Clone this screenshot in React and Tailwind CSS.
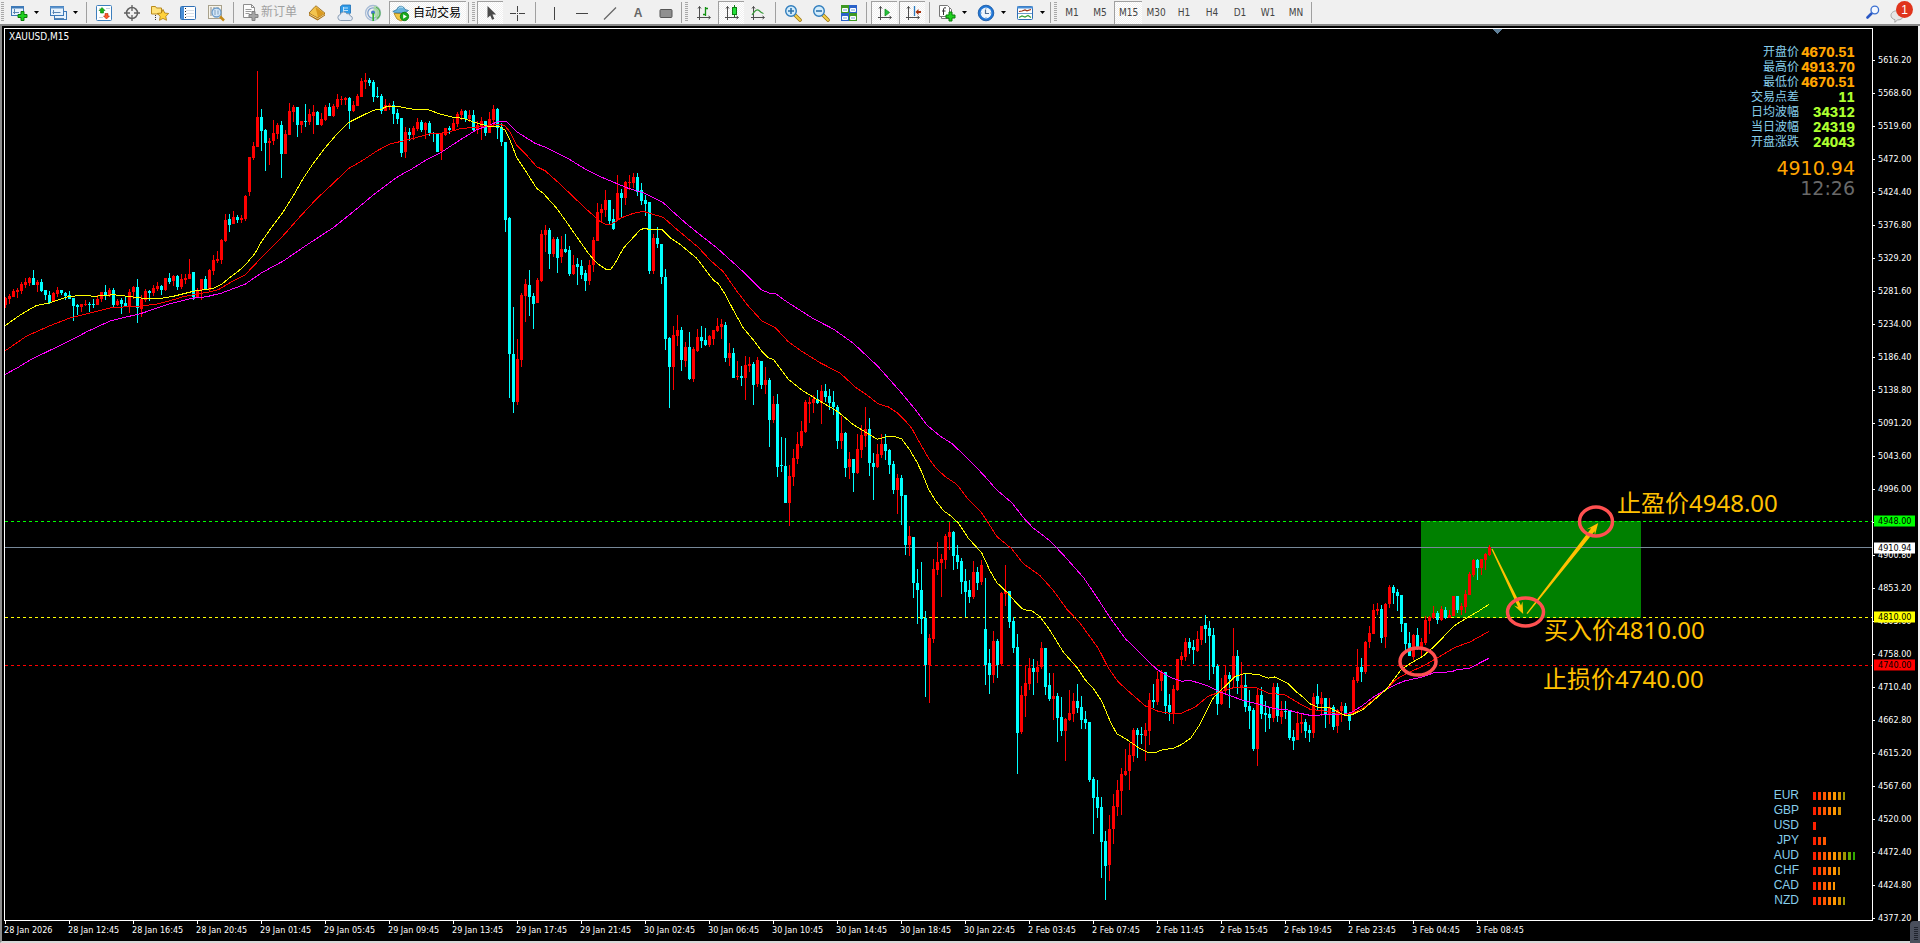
import React from "react";

/* ---------- chart data ---------- */

const VIEW = { x: 5, y: 29, w: 1867, h: 891 };

// Each bar: direction (u/d), high, body top, body bottom, low.
const SEGMENTS = [
  {
    top: 40, unit: 3, bars: `u770,774,795,804 u762,768,777,792 u747,753,771,771 u744,750,756,774 u726,732,753,762 u714,726,735,744
u711,714,729,738 d690,714,735,735 u720,726,735,756 d717,726,753,756 d750,750,765,780 d753,765,789,792 u756,759,783,786
u741,750,762,771 d750,750,759,765 d756,759,768,780 d753,765,777,777 d774,774,798,843 d792,795,801,825 u792,792,801,816
u780,792,795,798 d786,792,795,816 d777,792,795,804 u765,777,795,795 u756,756,777,786 d735,756,768,780 u744,750,768,771
d744,750,795,801 u777,783,795,798 d774,780,792,822 d771,789,798,801 u747,756,801,819 u738,741,756,777 d717,741,804,849
u765,777,807,831 u747,753,780,786 d750,753,759,783 u735,744,759,768 u726,738,747,753 d735,738,750,765 u714,714,750,753
d699,714,726,732 u705,708,723,738 d705,708,741,750 u702,717,741,747 u702,714,720,732 u657,702,717,717 d696,696,771,780
u744,750,771,774 u717,717,750,780 d708,717,750,750 u687,690,750,756 u645,660,693,705 u633,657,663,669 u597,600,660,672
u522,540,603,606 d522,537,555,576 u513,531,552,552 d525,531,540,549 u525,534,540,549 u465,468,537,543 u351,351,456,468
u306,318,354,360 u93,231,321,321 d207,231,273,333 d267,270,309,393 u294,303,309,375 u240,279,303,315 u249,255,282,297
d243,255,342,414 u270,282,342,342 u189,213,285,285 u195,201,216,246 d201,201,255,291 u243,243,255,279 d192,243,246,261
u207,222,246,255 u195,216,228,282 d213,216,255,255 u219,237,255,258 u195,201,240,243 d189,201,228,228 u192,198,228,231
u162,177,201,207 u168,177,180,195 u171,174,180,195 d171,174,213,267 u183,195,213,216 u162,168,198,198 u114,123,171,171
u99,120,126,147 d114,120,129,138 d120,126,171,186 d141,168,171,174 d162,168,213,222 u177,195,213,213 u189,195,198,210
d183,195,222,252 d207,219,237,252 d234,234,339,351 u261,276,336,354 d264,276,285,303 u258,264,285,300 u234,246,267,273
d240,246,270,276 u246,249,270,297 d243,249,279,288 d276,279,282,306 d282,282,336,336 u279,279,333,360 u264,264,285,288
d258,264,270,282 u237,249,270,273 u216,222,252,261 u207,213,225,240 d210,213,237,246 u210,225,237,246 d210,225,270,273
u243,255,270,282 u231,243,258,300 d243,243,279,288 u216,237,279,279 u195,207,240,261 d204,207,264,297`,
  },
  {
    top: 100, unit: 3, bars: `d69,81,126,138 d126,126,360,396 d351,354,762,894 d621,762,906,939 u717,777,906,915 u579,585,780,801
u537,552,588,666 d510,555,591,648 d579,588,612,687 u534,540,609,609 u390,402,543,546 u375,390,405,456 d384,390,462,507
u411,417,462,471 d411,417,474,519 u408,447,471,489 d402,447,456,459 d438,450,522,528 u465,495,522,525 d474,492,501,555
d480,498,525,537 d510,519,543,573 u480,495,543,555 u411,420,495,516 u309,336,423,423 u312,327,339,363 u270,300,330,351
d300,300,363,375 d327,357,387,390 u225,279,360,363 d267,279,294,351 u243,246,294,315 u225,246,249,270 u219,231,249,264
d219,231,276,288 d249,270,303,315 d285,300,312,348 d306,306,513,522 u402,414,513,522 d381,414,432,444 d432,432,531,552
d507,531,717,750 d711,714,801,924 u678,705,801,870 u645,690,708,738 d681,690,780,813 u726,741,783,801 d696,741,837,840
u741,747,837,846 u687,711,753,756 d678,711,723,744 d684,720,735,738 u705,708,735,741 u690,690,717,735 u654,678,693,696
u657,672,681,717 d666,675,774,786 u729,759,774,798 d744,759,834,834 u783,828,831,840 d798,828,834,858 u768,795,834,900
u771,792,798,816 d786,792,855,915 u771,780,852,861 d783,783,855,867 u801,840,855,882 d834,840,960,1041 u888,912,960,969
d882,912,1101,1131 d1011,1095,1098,1116 d1014,1098,1209,1209 u1095,1128,1209,1278 u1047,1074,1131,1158 u996,1032,1077,1092
u963,993,1038,1044 u900,906,996,999 u891,906,912,969 u885,897,909,939 d870,897,909,912 u855,873,909,972 d852,873,891,906
d867,888,909,930 d873,906,921,945 d915,921,1023,1047 u948,999,1023,1047 d996,999,1104,1131 u1056,1077,1101,1137
d1077,1077,1119,1176 u1002,1047,1119,1122 u975,1005,1050,1074 u921,987,1008,1041 d954,987,1089,1128 d1059,1089,1101,1200
u1032,1062,1101,1104`,
  },
  {
    top: 380, unit: 2.9037, bars: `u156,186,218,226 d156,186,206,232 d200,203,247,273 d235,244,319,331 u273,285,318,389 d276,285,337,421
d334,334,479,508 u424,453,479,511 d456,456,589,633 d549,589,610,709 d528,610,694,738 d671,691,828,920 u738,749,828,938
u520,549,752,764 u470,528,552,566 u505,520,531,630 u447,453,523,549 u412,441,456,494 d438,441,511,552 d479,508,528,549
d517,526,587,621 d549,584,616,689 d581,610,630,648 u526,558,630,636 d543,558,589,610 u523,537,587,595 d575,723,828,886
d781,822,857,912 u729,758,857,880 d752,758,828,865 u616,618,825,830 u537,613,621,656 d613,613,703,720 d688,700,778,793
d738,775,1025,1144 u889,915,1022,1028 u828,880,918,979 u807,836,883,900 d810,836,848,915 u816,833,848,880 u761,778,833,839
d778,778,891,915 d851,886,926,932 u851,918,926,987 d909,918,981,1051 d920,979,1019,1034 u981,984,1019,1106 u900,967,987,990
u909,932,970,993 d883,932,952,967 d918,950,987,1013 d961,984,996,1013 d993,993,1161,1167 d1153,1159,1214,1318
d1161,1211,1243,1272 d1211,1240,1342,1446 d1310,1339,1411,1510 u1263,1304,1408,1455 u1202,1237,1304,1347
u1161,1191,1240,1266 u1127,1144,1193,1263 u1071,1135,1147,1150 u1054,1089,1135,1191 u1010,1016,1092,1109 d1010,1016,1031,1098
d1008,1028,1031,1057 u996,1016,1034,1106 u909,929,1019,1060 d883,929,935,952 u845,868,935,944 u842,848,874,903
d848,848,947,970 d912,944,964,990 u886,897,967,999 u810,810,900,903 u790,801,813,828 u749,761,804,816 d749,761,778,796
d755,775,784,825 u729,752,787,790 u714,714,755,769 d682,711,723,764 d700,720,743,871 d720,740,833,854 d825,830,941,973
u865,903,941,944 u828,857,903,912 d848,857,868,952 u720,801,865,891 d784,801,874,912 u819,886,892,929 d851,886,950,964
d900,947,961,1013 d952,958,1071,1077 u897,915,1071,1121 d891,915,970,984 d932,967,973,1022 d952,970,981,1013
u880,891,981,993 d880,891,976,993`,
  },
  {
    top: 500, unit: 3, bars: `u603,633,651,672 d603,633,636,657 d630,633,714,720 d690,711,723,750 u633,669,720,720 u642,666,672,699
d657,666,693,714 d675,690,699,726 u579,591,699,714 d552,588,612,630 u576,594,612,648 d594,594,642,684 u594,621,642,672
d615,621,681,690 u627,630,678,699 u606,618,633,666 d609,618,645,648 d636,642,663,690 u531,540,642,645 u447,501,543,549
d474,501,516,546 u423,426,516,522 u378,399,426,444 u312,330,402,402 u309,327,333,345 d315,327,414,429 u309,312,411,444
u255,261,312,324 d255,261,279,312 d267,276,288,333 d285,285,372,396 d369,369,432,450 d396,429,468,468 u402,405,471,480
d384,405,444,450 u414,426,441,471 u348,360,429,435 u348,351,363,402 u318,339,354,357 d333,339,360,372 u318,327,360,363
d321,330,354,357 u330,345,354,354 u288,288,348,348 d288,288,330,339 u309,318,330,345 u270,282,321,339 u216,222,285,285
u177,180,225,231 d177,180,204,240 u177,177,204,225 u159,162,180,210 u135,141,165,168`,
  },
];

function candlePaths() {
  let i = 0;
  const out = { u: "", d: "" };
  for (const seg of SEGMENTS) {
    const py = (v) => Math.round(seg.top + v / seg.unit);
    for (const bar of seg.bars.trim().split(/\s+/)) {
      const [h, t, b, l] = bar.slice(1).split(",").map(Number).map(py);
      const x = VIEW.x + i * 4;
      const low = Math.max(l, b);
      out[bar[0]] += `M${x} ${h}h1V${low}h-1zM${x - 1} ${t}h3V${Math.max(b, t + 1)}h-3z`;
      i += 1;
    }
  }
  return out;
}

const PANES = [
  { left: 0, top: 40, unit: 3 },
  { left: 500, top: 100, unit: 3 },
  { left: 880, top: 380, unit: 2.9037 },
  { left: 1280, top: 500, unit: 3 },
];

const AVERAGES = [
  {
    color: "#ff00ff",
    parts: [
      "16,1003 55,982 90,960 150,931 200,907 265,873 330,843 425,820 500,794 575,775 620,770 665,759 735,733 785,698 850,663 920,615 1000,563 1060,515 1120,465 1195,409 1235,387 1280,359 1325,336 1380,300 1430,269 1465,257 1495,244",
      "20,66 50,95 105,130 135,141 200,173 260,210 305,232 385,265 435,280 490,308 520,336 560,372 610,412 650,443 700,488 740,525 785,570 810,580 825,580 860,605 940,656 1000,687 1060,730 1120,786 1140,806",
      "30,0 65,38 110,91 140,130 180,163 215,184 260,225 310,275 350,319 395,356 435,405 460,430 510,467 550,508 610,573 650,630 690,690 735,750 785,798 830,840 870,863 905,875 930,872 980,887 1020,906 1085,929 1140,942 1180,954",
      "0,628 20,629 60,640 90,646 190,643 215,637 245,618 285,588 330,562 370,544 430,530 460,519 515,515 535,508 565,506 627,475",
    ],
  },
  {
    color: "#ff0000",
    parts: [
      "16,932 80,888 150,857 210,834 330,804 380,800 425,798 470,792 510,782 550,770 590,762 625,757 655,749 690,728 735,705 785,652 845,592 900,530 950,476 1000,430 1045,386 1090,360 1130,333 1170,312 1230,298 1290,281 1340,278 1380,266 1420,262 1465,257",
      "0,73 15,77 30,97 50,135 75,160 110,200 135,212 180,252 230,300 265,333 300,364 320,374 335,372 365,353 400,340 430,334 455,342 490,352 520,379 560,413 595,442 630,480 670,515 710,573 745,618 785,662 805,673 825,682 865,725 905,754 960,788 1020,819 1070,865 1100,884 1130,908",
      "0,71 25,78 50,94 70,112 95,140 115,175 145,226 170,258 195,280 230,303 265,347 305,386 325,415 350,454 395,490 430,533 480,568 520,611 560,665 600,706 655,779 685,836 715,877 745,903 795,946 835,962 875,969 905,967 945,950 985,918 1030,903 1065,892 1125,892 1165,909",
      "0,583 12,583 50,606 90,628 140,634 185,643 215,641 250,624 320,567 350,537 380,520 430,498 475,472 525,442 570,426 627,394",
    ],
  },
  {
    color: "#ffff00",
    parts: [
      "16,857 50,832 80,813 108,797 150,788 200,771 245,766 285,769 340,764 400,771 430,775 485,775 520,769 580,754 640,745 665,733 690,712 715,694 740,670 765,640 784,606 820,555 850,515 880,467 910,415 940,370 975,324 1010,283 1045,248 1080,230 1120,211 1145,207 1160,199 1190,199 1240,208 1285,209 1320,222 1360,232 1390,235 1420,246 1465,259",
      "0,81 15,90 30,120 50,173 75,210 110,265 130,280 170,325 200,367 235,417 265,460 290,489 318,508 332,508 345,490 370,445 400,412 420,390 435,384 450,390 485,388 510,413 540,433 590,475 640,540 655,551 675,582 700,630 730,684 765,726 785,753 805,773 820,778 865,838 905,870 950,898 985,918 1015,936 1060,974 1090,992 1115,1008 1132,1018",
      "0,170 20,164 45,164 65,171 90,204 110,237 125,267 145,315 165,348 190,379 215,397 235,415 265,459 305,502 330,554 350,588 385,620 405,643 425,663 440,669 455,670 480,687 510,727 550,790 590,834 615,870 640,896 665,932 690,990 710,1027 740,1044 775,1067 800,1080 822,1083 850,1073 880,1070 905,1058 932,1040 960,1000 985,950 1000,923 1015,908 1040,885 1065,861 1095,852 1135,855 1165,866 1185,862",
      "0,538 25,551 45,572 70,592 90,611 110,621 150,624 175,636 195,646 212,646 250,628 280,602 320,567 345,534 365,507 400,485 430,468 465,437 490,411 525,376 560,354 595,334 627,313",
    ],
  },
];

const averagePoints = (parts) =>
  parts
    .flatMap((part, i) =>
      part.split(" ").map((p) => {
        const [x, y] = p.split(",").map(Number);
        return `${(PANES[i].left + x / 3).toFixed(1)},${(PANES[i].top + y / PANES[i].unit).toFixed(1)}`;
      })
    )
    .join(" ");

const PRICES = [
  "5616.20", "5568.60", "5519.60", "5472.00", "5424.40", "5376.80", "5329.20", "5281.60", "5234.00",
  "5186.40", "5138.80", "5091.20", "5043.60", "4996.00", "4948.40", "4900.80", "4853.20", "4805.60",
  "4758.00", "4710.40", "4662.80", "4615.20", "4567.60", "4520.00", "4472.40", "4424.80", "4377.20",
];

const TIMES = [
  "28 Jan 2026", "28 Jan 12:45", "28 Jan 16:45", "28 Jan 20:45", "29 Jan 01:45", "29 Jan 05:45",
  "29 Jan 09:45", "29 Jan 13:45", "29 Jan 17:45", "29 Jan 21:45", "30 Jan 02:45", "30 Jan 06:45",
  "30 Jan 10:45", "30 Jan 14:45", "30 Jan 18:45", "30 Jan 22:45", "2 Feb 03:45", "2 Feb 07:45",
  "2 Feb 11:45", "2 Feb 15:45", "2 Feb 19:45", "2 Feb 23:45", "3 Feb 04:45", "3 Feb 08:45",
];

const TAGS = [
  { y: 520, text: "4948.00", cls: "bg-[#00ff00] text-black" },
  { y: 547, text: "4910.94", cls: "bg-white text-black" },
  { y: 616, text: "4810.00", cls: "bg-[#ffff00] text-black" },
  { y: 664, text: "4740.00", cls: "bg-[#ff0000] text-black" },
];

const STATS = [
  ["开盘价", "4670.51", "text-[#ffa500]"],
  ["最高价", "4913.70", "text-[#ffa500]"],
  ["最低价", "4670.51", "text-[#ffa500]"],
  ["交易点差", "11", "text-[#adff2f]"],
  ["日均波幅", "34312", "text-[#adff2f]"],
  ["当日波幅", "24319", "text-[#adff2f]"],
  ["开盘涨跌", "24043", "text-[#adff2f]"],
];

const METER = [
  "bg-[#ff2000]", "bg-[#ff3c00]", "bg-[#ff5a00]", "bg-[#ff7800]", "bg-[#ff9600]",
  "bg-[#d28c00]", "bg-[#a09600]", "bg-[#64aa00]", "bg-[#32aa00]",
];

// name, number of bars, whether the last bar is a partial one
const STRENGTH = [
  ["EUR", 7, true], ["GBP", 6, false], ["USD", 1, false], ["JPY", 3, false],
  ["AUD", 9, true], ["CHF", 6, true], ["CAD", 5, true], ["NZD", 7, true],
];

const NOTES = [
  { x: 1617, y: 503, text: "止盈价4948.00" },
  { x: 1544, y: 630, text: "买入价4810.00" },
  { x: 1543, y: 679, text: "止损价4740.00" },
];

/* ---------- toolbar icons ---------- */

const Icon = ({ children, size = "size-[18px]" }) => (
  <svg viewBox="0 0 18 18" className={`${size} shrink-0`} fill="none" aria-hidden="true">
    {children}
  </svg>
);

const Plus = ({ x, y, fill = "#1fd11f", stroke = "#0a7d0a" }) => (
  <path
    transform={`translate(${x} ${y})`}
    d="M3.5 .5h3v3h3v3h-3v3h-3v-3h-3v-3h3z"
    fill={fill}
    stroke={stroke}
  />
);

const Axes = () => (
  <g stroke="#4d4d4d" strokeWidth="1">
    <path d="M4.5 2.5v13.5M2 13.5h13" />
    <path d="M3 4.5l1.500-2 1.500 2M13.500 12l2 1.500-2 1.500" />
  </g>
);

const NewChartIcon = () => (
  <Icon>
    <rect x="1.500" y="2.500" width="12" height="9" fill="#e9f3fc" stroke="#3f7ab8" />
    <path d="M1 3.500h13" stroke="#3f7ab8" strokeWidth="2" />
    <path d="M4.500 5v5M3 8.500h6" stroke="#5a86b3" />
    <Plus x={7.5} y={7} />
  </Icon>
);

const ProfilesIcon = () => (
  <Icon>
    <rect x="5.500" y="7.500" width="12" height="8" fill="#e9f3fc" stroke="#3f7ab8" />
    <rect x="1.500" y="2.500" width="13" height="9" fill="#e9f3fc" stroke="#3f7ab8" />
    <path d="M1 3.500h14" stroke="#5b93cc" strokeWidth="2" />
    <path d="M4.500 6v4M3.500 8.500h8M6 14.500h9" stroke="#5a86b3" />
  </Icon>
);

const MarketWatchIcon = () => (
  <Icon>
    <rect x="1.500" y="1.500" width="15" height="15" rx="1" fill="#fff" stroke="#3d7fbd" />
    <path d="M4 4.500h1M11 4.500h4M4 13.500h4" stroke="#c7d3de" />
    <path d="M7 3.500l3 3h-1.500v2.500h-3v-2.500h-1.500z" fill="#18b418" stroke="#0b7a0b" strokeWidth=".6" />
    <path d="M11.500 15l3-3h-1.500v-2.500h-3v2.500h-1.500z" fill="#ff5a28" stroke="#b32a05" strokeWidth=".6" />
  </Icon>
);

const DataWindowIcon = () => (
  <Icon>
    <circle cx="9" cy="9" r="5.500" stroke="#606060" strokeWidth="1.500" />
    <path d="M9 1v6M9 11v6M1 9h6M11 9h6" stroke="#606060" strokeWidth="1.300" />
  </Icon>
);

const Star = ({ x, y }) => (
  <path
    transform={`translate(${x} ${y})`}
    d="M6 .4l1.700 3.600 4 .5-2.900 2.800.7 4L6 9.400 2.500 11.300l.7-4L.3 4.500l4-.5z"
    fill="#ffd23c"
    stroke="#a9780c"
    strokeWidth=".8"
  />
);

const NavigatorIcon = () => (
  <Icon>
    <path d="M.5 2.500h4l1 1.500h5v6h-10z" fill="#ffe27a" stroke="#b98a1c" />
    <path d="M4.500 11v6" stroke="#333" strokeDasharray="1 1" />
    <Star x={6} y={5} />
  </Icon>
);

const TerminalIcon = () => (
  <Icon>
    <rect x="1.500" y="2.500" width="15" height="13" rx="1" fill="#fff" stroke="#2f6fb5" />
    <rect x="2" y="3" width="3" height="12" fill="#4a8fd6" />
    <path d="M7 6.500h8M7 9.500h8M7 12.500h8" stroke="#d7dfe7" />
    <path d="M6.500 4v10" stroke="#222" strokeDasharray="1 2" />
  </Icon>
);

const TesterIcon = () => (
  <Icon>
    <rect x="1.500" y="1.500" width="13" height="13" fill="#f7f4ea" stroke="#a8a18c" />
    <path d="M4 3v9M7 3v4M11 3v5" stroke="#8d8d8d" />
    <circle cx="9.500" cy="8.500" r="4.500" fill="#cfe6fa" fillOpacity=".9" stroke="#6d9cc9" strokeWidth="1.300" />
    <path d="M8 6v5M11 6.500v4" stroke="#7f9fbc" />
    <path d="M13 12.500l4 4" stroke="#c48a1a" strokeWidth="2.500" />
  </Icon>
);

const NewOrderIcon = () => (
  <Icon>
    <path d="M2.500 1.500h8l3 3v10h-11z" fill="#fdfdfd" stroke="#8e8e8e" />
    <path d="M10.500 1.500v3h3" stroke="#8e8e8e" />
    <path d="M4.500 6.500h6M4.500 8.500h6M4.500 10.500h4" stroke="#9a9a9a" />
    <Plus x={7.5} y={8} fill="#a6a6a6" stroke="#828282" />
  </Icon>
);

const MetaEditorIcon = () => (
  <Icon>
    <path d="M1 9L7 2.500c.8-.6 1.300-.5 1.800-.1L17 9.200 9.800 15.500z" fill="#f3c44e" stroke="#8f5f10" strokeWidth=".8" />
    <path d="M7.500 3L16 9.200l-6 4.300z" fill="#d99a22" />
    <path d="M1 9l8.800 4.500L17 9.200v2.300l-7.500 5L1 11.500z" fill="#a86f12" />
    <path d="M1.500 10.300l8.200 4.400 6.800-4.200" stroke="#ffe9a8" strokeWidth=".8" />
  </Icon>
);

const CloudIcon = () => (
  <Icon>
    <path d="M4.500 2.500l2-1.500h8v8l-1.500 1.500h-8.500z" fill="#2f9be8" stroke="#1c6fb5" strokeWidth=".8" />
    <path d="M7 4h5M7 6.500h5M7.500 3v6" stroke="#bfe3fb" />
    <path d="M4.500 16.500a3 3 0 0 1-.3-5.900 3.600 3.600 0 0 1 6.600-.9 2.900 2.900 0 0 1 3.600 2.300 2.300 2.300 0 0 1 .3 4.500z" fill="#e4ebf4" stroke="#7f93ab" strokeWidth=".9" />
  </Icon>
);

const SignalsIcon = () => (
  <Icon>
    <circle cx="9" cy="9" r="7.500" stroke="#a8bcd6" strokeWidth="1.300" />
    <circle cx="9" cy="9" r="5.200" stroke="#7fa0cc" strokeWidth="1.300" />
    <path d="M9 9l3.500 7a7.500 7.500 0 0 0 4-7.500A7.500 7.500 0 0 0 10 1.600" fill="#a9d9a2" fillOpacity=".8" />
    <path d="M12 3.300A6.300 6.300 0 0 1 13 14.500" stroke="#55ad55" strokeWidth="1.200" />
    <circle cx="9" cy="8.500" r="2" fill="#4778c9" />
    <path d="M9.200 9v8" stroke="#2fae2f" strokeWidth="1.600" />
  </Icon>
);

const AutoTradingIcon = () => (
  <Icon>
    <path d="M2 9.500h13l-2 5-4 2.500-4-2z" fill="#f2c744" stroke="#a67d14" strokeWidth=".8" />
    <path d="M.8 7.500C3 9.500 14 9.500 16.500 6.500l-3.500-1C12 1.500 6 .8 5 5.500z" fill="#69b3dd" stroke="#2f779f" strokeWidth=".8" />
    <path d="M6.500 4.500c1-1.600 3.500-1.800 4.500-1" stroke="#c8e8f8" />
    <circle cx="12.500" cy="12.500" r="4.200" fill="#17a81e" stroke="#0b7a12" strokeWidth=".8" />
    <path d="M11.200 10.200v4.600l3.600-2.300z" fill="#fff" />
  </Icon>
);

const CursorIcon = () => (
  <Icon>
    <path d="M5.500 2v12l2.800-2.600 1.800 4.300 2.200-1-1.900-4.100h3.700z" fill="#4a4a4a" />
  </Icon>
);

const CrosshairIcon = () => (
  <Icon>
    <path d="M9.500 2v6M9.500 11v6M2 9.500h6M11 9.500h6M9 9.500h1" stroke="#444" />
  </Icon>
);

const VLineIcon = () => <Icon><path d="M9.500 3v13" stroke="#444" /></Icon>;
const HLineIcon = () => <Icon><path d="M3 9.500h12" stroke="#444" /></Icon>;
const TrendIcon = () => <Icon><path d="M3 15.500L15 3.500" stroke="#666" strokeWidth="1.300" /></Icon>;
const RectIcon = () => (
  <Icon><rect x="3" y="5.500" width="12" height="8" rx="1" fill="#8f8f8f" stroke="#555" /></Icon>
);

const BarsIcon = () => (
  <Icon>
    <Axes />
    <path d="M10.500 3v9M8 10.500h3M10 4.500h3" stroke="#129112" strokeWidth="1.300" />
  </Icon>
);

const CandlesIcon = () => (
  <Icon>
    <Axes />
    <path d="M11.500 1v12" stroke="#0f7f14" />
    <rect x="9.500" y="3.500" width="4" height="7" fill="#23e03a" stroke="#0f7f14" />
  </Icon>
);

const LineIcon = () => (
  <Icon>
    <Axes />
    <path d="M3 11c2.500-4 5-6.500 7-4.500s2.500 2.500 4.500 3" stroke="#3a9a3a" strokeWidth="1.200" />
  </Icon>
);

const ZoomIcon = ({ plus }) => (
  <Icon>
    <path d="M11 11l5 5" stroke="#9a7410" strokeWidth="3.600" strokeLinecap="round" />
    <path d="M11 11l5 5" stroke="#f4cf4a" strokeWidth="2" strokeLinecap="round" />
    <circle cx="7" cy="7" r="5.300" fill="#d3ecfb" stroke="#2f7dbd" strokeWidth="1.400" />
    <path d={plus ? "M4 7h6M7 4v6" : "M4 7h6"} stroke="#2f74ad" strokeWidth="1.600" />
  </Icon>
);

const TileIcon = () => (
  <Icon>
    <rect x="1" y="1" width="8" height="8" fill="#3f9a24" />
    <rect x="9" y="1" width="8" height="8" fill="#2a62c9" />
    <rect x="1" y="9" width="8" height="8" fill="#2a62c9" />
    <rect x="9" y="9" width="8" height="8" fill="#3f9a24" />
    <path d="M2.500 4.500h5v3h-5zM10.500 4.500h5v3h-5zM2.500 12.500h5v3h-5zM10.500 12.500h5v3h-5z" fill="#dfeefb" stroke="#fff" />
    <path d="M3 6h4M11 6h4M3 14h4M11 14h4" stroke="#8fb0d8" />
  </Icon>
);

const AutoScrollIcon = () => (
  <Icon>
    <Axes />
    <path d="M9 5l4.500 3.500L9 12z" fill="#22c53a" stroke="#128a20" strokeWidth=".8" />
  </Icon>
);

const ShiftIcon = () => (
  <Icon>
    <Axes />
    <path d="M10.500 2v10" stroke="#2a7cc0" strokeWidth="1.300" />
    <path d="M11.500 8l3-3v2h2.500v2h-2.500v2z" fill="#a3300c" />
  </Icon>
);

const IndicatorsIcon = () => (
  <Icon>
    <path d="M3.500 3.500h8l2 2v9h-10z" fill="#fff" stroke="#777" />
    <path d="M1.500 1.500h8l2 2v9h-10z" fill="#fff" stroke="#777" />
    <path d="M8 4c-2-1-2.500.5-2.500 2v5M4 7h3.500" stroke="#333" />
    <Plus x={7.5} y={7.5} />
  </Icon>
);

const ClockIcon = () => (
  <Icon>
    <circle cx="9" cy="9" r="7.800" fill="#2277d6" stroke="#0f529f" strokeWidth=".8" />
    <circle cx="9" cy="9" r="5.400" fill="#eef6fd" />
    <path d="M8.500 5.500V9.500H12" stroke="#4a6d95" strokeWidth="1.200" />
    <path d="M9 4v1M9 13v1M4 9h1M13 9h1" stroke="#8aa8c8" />
  </Icon>
);

const TemplatesIcon = () => (
  <Icon>
    <rect x="1.500" y="2.500" width="15" height="13" rx="1" fill="#fff" stroke="#2f6fb5" />
    <path d="M1 3.500h16" stroke="#4a8fd6" strokeWidth="2" />
    <path d="M2 9.500h14" stroke="#6a9bcb" />
    <path d="M3 7.500l3-.5 3-1 2 .8 4-1.300" stroke="#9c2f12" strokeWidth="1.200" />
    <path d="M3 13.500l3-1.500 3 1 3-1.500 3 2" stroke="#35a035" strokeWidth="1.200" />
  </Icon>
);

/* ---------- toolbar parts ---------- */

const Grip = () => (
  <span className="mx-px h-[20px] w-[3px] shrink-0 bg-[repeating-linear-gradient(to_bottom,#a8a8a8_0_1px,#f0f0f0_1px_2px)]" />
);

const Sep = ({ className = "mx-[3px]" }) => (
  <span className={`h-[21px] w-px shrink-0 bg-[#a0a0a0] ${className}`} />
);

const pressedLook =
  "border-l border-t border-[#a0a0a0] bg-[repeating-conic-gradient(#ffffff_0_25%,#f0f0f0_0_50%)] bg-[length:2px_2px]";

const Tool = ({ label, pressed, children, className = "w-[28px]" }) => (
  <button
    type="button"
    aria-label={label}
    aria-pressed={pressed ? true : undefined}
    className={`flex h-[23px] shrink-0 items-center justify-center pt-px ${className} ${pressed ? pressedLook : ""}`}
  >
    {children}
  </button>
);

const DropTool = ({ label, children }) => (
  <button type="button" aria-label={label} aria-haspopup="menu" className="flex h-[23px] w-[39px] shrink-0 items-center gap-[6px] pl-[5px] pt-px">
    {children}
    <svg viewBox="0 0 5 3" className="h-[3px] w-[5px]" aria-hidden="true">
      <path d="M0 0h5L2.500 3z" fill="#000" />
    </svg>
  </button>
);

const FRAMES = ["M1", "M5", "M15", "M30", "H1", "H4", "D1", "W1", "MN"];

function Toolbar() {
  return (
    <header className="flex h-[26px] shrink-0 items-center overflow-hidden border-b-2 border-[#8a8a8a] bg-[#f0f0f0]">
      <Grip />
      <DropTool label="新图表"><NewChartIcon /></DropTool>
      <DropTool label="配置文件"><ProfilesIcon /></DropTool>
      <Sep />
      <Tool label="市场报价"><MarketWatchIcon /></Tool>
      <Tool label="数据窗口"><DataWindowIcon /></Tool>
      <Tool label="导航"><NavigatorIcon /></Tool>
      <Tool label="终端"><TerminalIcon /></Tool>
      <Tool label="策略测试"><TesterIcon /></Tool>
      <Sep />
      <button type="button" disabled className="flex h-[23px] w-[66px] shrink-0 items-center gap-[2px] pl-[4px] text-[12px] leading-[16px] text-[#a0a0a0]">
        <NewOrderIcon />
        <span className="whitespace-nowrap">新订单</span>
      </button>
      <Tool label="MetaEditor"><MetaEditorIcon /></Tool>
      <Tool label="虚拟主机"><CloudIcon /></Tool>
      <Tool label="信号"><SignalsIcon /></Tool>
      <button type="button" aria-pressed="true" className={`ml-[2px] flex h-[23px] w-[77px] shrink-0 items-center gap-[3px] pl-[2px] text-[12px] leading-[16px] text-black ${pressedLook}`}>
        <AutoTradingIcon />
        <span className="whitespace-nowrap">自动交易</span>
      </button>
      <Sep className="ml-[2px] mr-[2px]" />
      <Grip />
      <Tool label="光标" pressed className="ml-px w-[26px]"><CursorIcon /></Tool>
      <Tool label="十字准线"><CrosshairIcon /></Tool>
      <Sep className="mx-[4px]" />
      <Tool label="垂直线"><VLineIcon /></Tool>
      <Tool label="水平线"><HLineIcon /></Tool>
      <Tool label="趋势线"><TrendIcon /></Tool>
      <Tool label="文字"><span className="font-['Liberation_Sans',sans-serif] text-[12px] font-bold leading-[14px] text-[#666]">A</span></Tool>
      <Tool label="矩形"><RectIcon /></Tool>
      <Sep className="ml-px mr-[2px]" />
      <Grip />
      <Tool label="柱状图" className="ml-px w-[28px]"><BarsIcon /></Tool>
      <Tool label="蜡烛图" pressed className="w-[26px]"><CandlesIcon /></Tool>
      <Tool label="折线图"><LineIcon /></Tool>
      <Sep />
      <Tool label="放大"><ZoomIcon plus /></Tool>
      <Tool label="缩小"><ZoomIcon /></Tool>
      <Tool label="平铺窗口"><TileIcon /></Tool>
      <Sep />
      <Tool label="自动滚动" pressed className="mx-px w-[26px]"><AutoScrollIcon /></Tool>
      <Tool label="图表平移" pressed className="mx-px w-[26px]"><ShiftIcon /></Tool>
      <Sep />
      <DropTool label="指标"><IndicatorsIcon /></DropTool>
      <DropTool label="周期"><ClockIcon /></DropTool>
      <DropTool label="模板"><TemplatesIcon /></DropTool>
      <Sep className="mr-[2px]" />
      <Grip />
      {FRAMES.map((f) => (
        <Tool key={f} label={f} pressed={f === "M15"}>
          <span className="font-['DejaVu_Sans_Condensed','DejaVu_Sans',sans-serif] text-[10px] leading-[14px] text-[#444]">{f}</span>
        </Tool>
      ))}
      <Sep className="mx-px" />
      <div className="ml-auto flex items-center gap-[10px] pr-[7px]">
        <button type="button" aria-label="搜索" className="flex">
          <svg viewBox="0 0 14 14" className="size-[14px]" fill="none" aria-hidden="true">
            <path d="M1.500 12.500l4-4" stroke="#2a57c4" strokeWidth="2.600" strokeLinecap="round" />
            <circle cx="8.800" cy="5" r="3.800" fill="#f4f8ff" stroke="#3a6fd0" strokeWidth="1.300" />
          </svg>
        </button>
        <button type="button" aria-label="消息 1" className="relative flex h-[22px] w-[23px] items-end">
          <svg viewBox="0 0 16 13" className="h-[13px] w-[16px]" aria-hidden="true">
            <path d="M7 .8c4 0 6.500 2 6.500 4.600S11 10 7.500 10L4.800 12.300 5 9.700C2.500 9 1 7.500 1 5.400 1 2.800 3.500.8 7 .8z" fill="#e6e6e6" stroke="#a6a6a6" />
          </svg>
          <span className="absolute right-0 top-0 flex size-[17px] items-center justify-center rounded-full bg-[#e0341c] font-['Liberation_Sans',sans-serif] text-[12px] leading-none text-white">1</span>
        </button>
      </div>
    </header>
  );
}

/* ---------- chart ---------- */

const AXIS_FONT = "font-['DejaVu_Sans_Condensed','DejaVu_Sans',sans-serif]";

function Plot() {
  const c = candlePaths();
  return (
    <div className="relative min-h-0 min-w-0 overflow-hidden border border-white">
      <svg
        viewBox={`${VIEW.x} ${VIEW.y} ${VIEW.w} ${VIEW.h}`}
        preserveAspectRatio="none"
        className="absolute inset-0 size-full"
        fill="none"
        role="img"
        aria-label="XAUUSD M15"
      >
        <rect x="1421" y="521" width="220" height="97" fill="#008000" shapeRendering="crispEdges" />
        <g shapeRendering="crispEdges">
          <path d="M5 521.500H1872" stroke="#00ff00" strokeDasharray="3 3" />
          <path d="M5 617.500H1872" stroke="#ffff00" strokeDasharray="3 3" />
          <path d="M5 665.500H1872" stroke="#ff0000" strokeDasharray="3 3" />
          <path d="M5 547.500H1872" stroke="#778899" />
          <path d={c.u} fill="#ff0000" />
          <path d={c.d} fill="#00ffff" />
          {AVERAGES.map((a) => (
            <polyline key={a.color} points={averagePoints(a.parts)} stroke={a.color} />
          ))}
          <path d="M1492 29h10l-5 5z" fill="#5f7f98" />
        </g>
        <g fill="#ffc000">
          <path d="M1491.400 549.300L1492.600 548.700 1521 605.600 1522.500 601.600 1523.200 614 1514 605.600 1518 607z" />
          <path d="M1526.500 613.300L1527.500 614.100 1594.600 531.200 1594.700 536 1598.200 523 1586.400 529.400 1591.200 528.200z" />
        </g>
        <g stroke="#ff5050" strokeWidth="3.500">
          <ellipse cx="1418" cy="661.500" rx="18" ry="13.500" />
          <ellipse cx="1525.500" cy="612" rx="18" ry="14" />
          <ellipse cx="1596" cy="521.500" rx="16.500" ry="14.500" />
        </g>
      </svg>

      <h1 className={`absolute left-[4px] top-[1px] text-[10px] leading-[14px] text-white ${AXIS_FONT}`}>XAUUSD,M15</h1>

      {NOTES.map((n) => (
        <p
          key={n.text}
          className="absolute -translate-y-1/2 whitespace-nowrap font-['Noto_Sans','Noto_Sans_CJK_SC',sans-serif] text-[24px] leading-[32px] text-[#ffc000]"
          style={{ left: `${((n.x - VIEW.x) / VIEW.w) * 100}%`, top: `${((n.y - VIEW.y) / VIEW.h) * 100}%` }}
        >
          {n.text}
        </p>
      ))}

      <section className="absolute right-[17px] top-[16px] flex flex-col items-end">
        <dl className="grid grid-cols-[auto_56px] text-right">
          {STATS.map(([name, value, color]) => (
            <React.Fragment key={name}>
              <dt className="text-[12px] leading-[15px] text-[#87ceeb]">{name}</dt>
              <dd className={`font-['Inter','Liberation_Sans',sans-serif] text-[13px] font-extrabold leading-[15px] tabular-nums ${color}`}>{value}</dd>
            </React.Fragment>
          ))}
        </dl>
        <p className="mt-[8px] font-['DejaVu_Sans',sans-serif] text-[19px] leading-[20px] text-[#ffa500]">4910.94</p>
        <p className="font-['DejaVu_Sans',sans-serif] text-[19px] leading-[20px] text-[#696969]">12:26</p>
      </section>

      <ul className="absolute bottom-[12px] right-[17px] w-[80px]">
        {STRENGTH.map(([name, n, partial]) => (
          <li key={name} className="flex h-[15px] items-center">
            <span className="w-[24px] flex-none" />
            <span className="flex w-0 justify-end font-['Liberation_Sans',sans-serif] text-[12px] leading-[15px] text-[#87ceeb]">{name}</span>
            <span className="ml-[14px] flex gap-[2px]">
              {METER.slice(0, n).map((m, i) => (
                <span key={m} className={`h-[8px] ${partial && i === n - 1 ? "w-[2px]" : "w-[3px]"} ${m}`} />
              ))}
            </span>
          </li>
        ))}
      </ul>
    </div>
  );
}

function PriceAxis() {
  return (
    <div className={`relative flex min-h-0 flex-col justify-between pb-[3px] pt-[32px] text-[9px] leading-[12px] text-white ${AXIS_FONT}`}>
      {PRICES.map((p) => (
        <div key={p} className="flex h-0 items-center gap-[3px]">
          <span className="h-px w-[2px] bg-white" />
          <span>{p}</span>
        </div>
      ))}
      {TAGS.map((t) => (
        <div
          key={t.text}
          className={`absolute left-[1px] right-[3px] h-[11px] -translate-y-1/2 pl-[4px] leading-[11px] ${t.cls}`}
          style={{ top: `${((t.y + 1 - 28) / 893) * 100}%` }}
        >
          {t.text}
        </div>
      ))}
    </div>
  );
}

function TimeAxis() {
  return (
    <div className={`grid grid-cols-[repeat(24,64fr)_332fr] pl-px text-[9px] leading-[12px] text-white ${AXIS_FONT}`}>
      {TIMES.map((t) => (
        <div key={t} className="min-w-0 whitespace-nowrap">
          <span className="block h-[3px] w-px bg-white" />
          <span className="-ml-px block">{t}</span>
        </div>
      ))}
    </div>
  );
}

export default function App() {
  return (
    <div className="flex h-screen flex-col bg-black font-['Liberation_Sans','Noto_Sans_CJK_SC',sans-serif]">
      <Toolbar />
      <main className="relative grid min-h-0 flex-1 grid-cols-[minmax(0,1fr)_45px] grid-rows-[minmax(0,1fr)_20px] border-b-2 border-l-2 border-r-2 border-b-[#d8d8d8] border-l-[#8c8c8c] border-r-[#f0f0f0] pl-[2px] pt-[2px]">
        <Plot />
        <PriceAxis />
        <TimeAxis />
        <div className="absolute -bottom-[2px] -right-[2px] h-[22px] w-[10px] rounded-tl bg-[#4a4f5c] pl-[4px] pt-[6px]">
          <div className="h-[14px] w-[4px] bg-[repeating-linear-gradient(to_bottom,#20242e_0_1px,#4a4f5c_1px_2px)]" />
        </div>
      </main>
    </div>
  );
}
